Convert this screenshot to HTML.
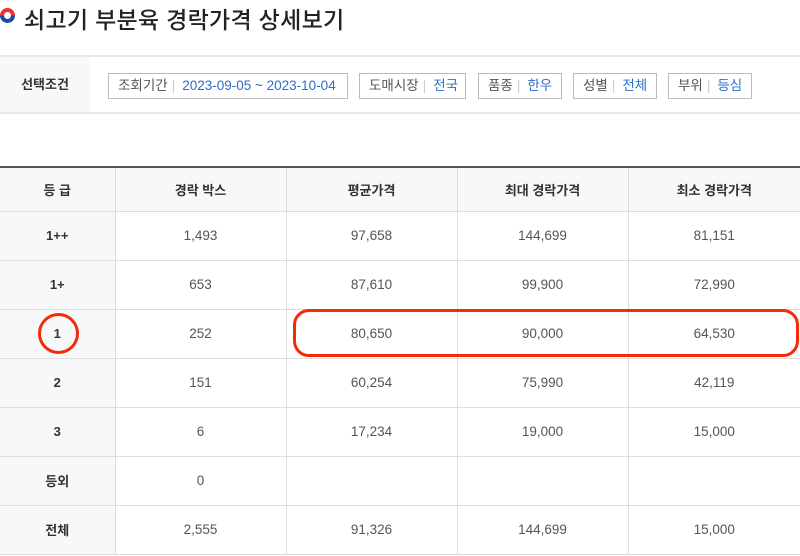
<!DOCTYPE html>
<html><head><meta charset="utf-8"><style>
*{margin:0;padding:0;box-sizing:border-box}
body{width:800px;height:556px;overflow:hidden;background:#fff;font-family:"Liberation Sans","Noto Sans CJK KR",sans-serif;position:relative;color:#333}
.title{position:absolute;left:24px;top:1px;font-size:23px;color:#222;letter-spacing:0.3px;font-weight:500}
.ic{position:absolute;left:0;top:8px;width:15px;height:15px;border-radius:50%;background:linear-gradient(#e33 0 50%,#1a4aa0 50% 100%)}
.ic:after{content:"";position:absolute;left:4px;top:4px;width:7px;height:7px;border-radius:50%;background:#fff}
.filter{position:absolute;left:0;top:55px;width:800px;height:59px;border-top:2px solid #e8e8e8;border-bottom:2px solid #e8e8e8}
.flab{position:absolute;left:0;top:0;width:90px;height:55px;background:#f7f8fa;font-size:13px;font-weight:bold;line-height:55px;text-align:center;color:#333}
.chip{position:absolute;top:16px;height:26px;border:1px solid #bbb;font-size:13.5px;line-height:24px;padding:0 9px;color:#555;white-space:nowrap}
.chip b{font-weight:normal;color:#ccc;margin:0 7px 0 4px}
.chip span{color:#2c6fc9}
table{position:absolute;left:0;top:166px;width:800px;border-collapse:collapse;border-top:2px solid #555}
td,th{height:49px;border-bottom:1px solid #ddd;border-left:1px solid #ddd;text-align:center;font-size:13.5px;color:#555}
th{height:44px;background:#f7f8fa;font-weight:bold;color:#333;font-size:13px}
td:first-child,th:first-child{border-left:none;background:#f7f8fa;font-weight:bold;color:#333;font-size:13px}
.circ{position:absolute;left:38px;top:313px;width:41px;height:41px;border:3px solid #f42a0c;border-radius:50%}
.rect{position:absolute;left:293px;top:309px;width:506px;height:48px;border:3px solid #f42a0c;border-radius:16px}
</style></head><body>
<div class="ic"></div>
<div class="title">쇠고기 부분육 경락가격 상세보기</div>
<div class="filter">
<div class="flab">선택조건</div>
<div class="chip" style="left:108px;width:240px">조회기간<b>|</b><span>2023-09-05 ~ 2023-10-04</span></div>
<div class="chip" style="left:359px;width:107px">도매시장<b>|</b><span>전국</span></div>
<div class="chip" style="left:478px;width:84px">품종<b>|</b><span>한우</span></div>
<div class="chip" style="left:573px;width:84px">성별<b>|</b><span>전체</span></div>
<div class="chip" style="left:668px;width:84px">부위<b>|</b><span>등심</span></div>
</div>
<table>
<colgroup><col style="width:115px"><col style="width:171px"><col style="width:171px"><col style="width:171px"><col style="width:172px"></colgroup>
<tr><th>등 급</th><th>경락 박스</th><th>평균가격</th><th>최대 경락가격</th><th>최소 경락가격</th></tr>
<tr><td>1++</td><td>1,493</td><td>97,658</td><td>144,699</td><td>81,151</td></tr>
<tr><td>1+</td><td>653</td><td>87,610</td><td>99,900</td><td>72,990</td></tr>
<tr><td>1</td><td>252</td><td>80,650</td><td>90,000</td><td>64,530</td></tr>
<tr><td>2</td><td>151</td><td>60,254</td><td>75,990</td><td>42,119</td></tr>
<tr><td>3</td><td>6</td><td>17,234</td><td>19,000</td><td>15,000</td></tr>
<tr><td>등외</td><td>0</td><td></td><td></td><td></td></tr>
<tr><td>전체</td><td>2,555</td><td>91,326</td><td>144,699</td><td>15,000</td></tr>
</table>
<div class="circ"></div>
<div class="rect"></div>
</body></html>
